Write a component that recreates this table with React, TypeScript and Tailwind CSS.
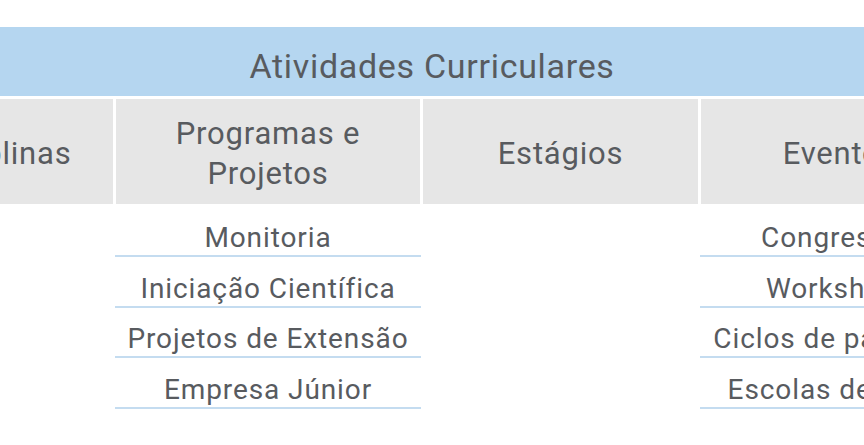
import React from "react";

const font = { fontFamily: "Roboto, 'Noto Sans', sans-serif" };

function Items({ items }: { items: string[] }) {
  return (
    <div className="flex flex-col pt-[2.5px] -mx-px">
      {items.map((t) => (
        <div
          key={t}
          className="h-[50.5px] flex items-center justify-center border-b-[2.5px] border-[#c4dcf0] text-[28px] tracking-[0.9px] text-[#585b5f] whitespace-nowrap pt-[15px]"
        >
          {t}
        </div>
      ))}
    </div>
  );
}

export default function App() {
  const cols = [
    { head: ["Disciplinas"], items: [] as string[] },
    {
      head: ["Programas e", "Projetos"],
      items: ["Monitoria", "Iniciação Científica", "Projetos de Extensão", "Empresa Júnior"],
    },
    { head: ["Estágios"], items: [] as string[] },
    {
      head: ["Eventos"],
      items: ["Congressos", "Workshops", "Ciclos de palestras", "Escolas de verão"],
    },
  ];
  return (
    <div className="w-[864px] h-[445px] bg-white overflow-hidden" style={font}>
      <div className="pt-[27px]">
        <div className="h-[69px] bg-[#b5d6f0] flex items-center justify-center text-[34px] tracking-[0.7px] text-[#585b5f] pt-[10px]">
          Atividades Curriculares
        </div>
        <div className="ml-[-129px] mt-[3px] grid grid-cols-[242px_304px_275px_278px] gap-x-[3px] w-max">
          {cols.map((c, i) => (
            <div key={i} className="flex flex-col">
              <div className="h-[105px] bg-[#e6e6e6] flex flex-col items-center justify-center text-[31px] tracking-[0.8px] leading-[40px] text-[#585b5f] whitespace-nowrap pt-[4px]">
                {c.head.map((h) => (
                  <span key={h}>{h}</span>
                ))}
              </div>
              <Items items={c.items} />
            </div>
          ))}
        </div>
      </div>
    </div>
  );
}
